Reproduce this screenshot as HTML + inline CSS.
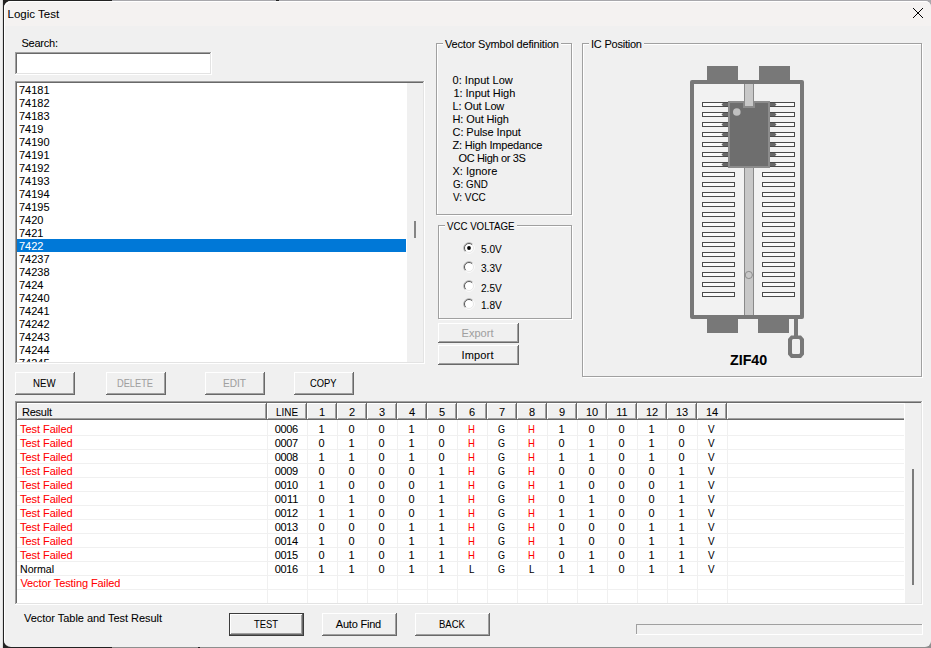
<!DOCTYPE html>
<html><head><meta charset="utf-8"><title>Logic Test</title>
<style>
html,body{margin:0;padding:0;width:931px;height:648px;overflow:hidden;background:#f0f0f0}
#w{position:relative;width:931px;height:648px;overflow:hidden;font:11px "Liberation Sans", sans-serif;}
#w div,#w span,#w svg{position:absolute;display:block}
#w span{white-space:pre;-webkit-text-stroke:0.06px}
</style></head><body><div id="w">
<div style="left:0px;top:0px;width:931px;height:648px;background:#f0f0f0"></div>
<div style="left:2px;top:0px;width:1px;height:648px;background:#dcdcdc"></div>
<div style="left:3px;top:0px;width:109px;height:648px;background:#222"></div>
<div style="left:112px;top:0px;width:819px;height:324px;background:#a8a8ac"></div>
<div style="left:112px;top:324px;width:819px;height:324px;background:#8e8e8e"></div>
<div style="left:198px;top:647px;width:2px;height:1px;background:#222"></div>
<div style="left:276px;top:0px;width:3px;height:1px;background:#222"></div>
<div style="left:4px;top:1px;width:927px;height:646px;background:#f0f0f0;border-radius:7px 6px 6px 7px;overflow:hidden"><div style="left:0;top:0;width:927px;height:25px;background:#f4f2f1"></div></div>
<div style="left:4px;top:1px;width:927px;height:646px;border-radius:7px 6px 6px 7px;box-shadow:inset 1px 1px 0 #fff"></div>
<svg style="left:908px;top:3px" width="20" height="20" viewBox="908 3 20 20"><path d="M913 8 L923 18 M923 8 L913 18" stroke="#000" stroke-width="1" fill="none"/></svg>
<div style="left:15px;top:52px;width:197px;height:23px;background:#fff"></div>
<div style="left:15px;top:52px;width:196px;height:22px;background:#a0a0a0"></div>
<div style="left:16px;top:53px;width:195px;height:21px;background:#e3e3e3"></div>
<div style="left:16px;top:53px;width:194px;height:20px;background:#696969"></div>
<div style="left:17px;top:54px;width:193px;height:19px;background:#fff"></div>
<div style="left:15px;top:81px;width:410px;height:283px;background:#fff"></div>
<div style="left:15px;top:81px;width:409px;height:282px;background:#a0a0a0"></div>
<div style="left:16px;top:82px;width:408px;height:281px;background:#e3e3e3"></div>
<div style="left:16px;top:82px;width:407px;height:280px;background:#696969"></div>
<div style="left:17px;top:83px;width:406px;height:279px;background:#fff"></div>
<div style="left:407px;top:83px;width:16px;height:279px;background:#f0f0f0"></div>
<div style="left:414px;top:221px;width:2px;height:17px;background:#858585"></div>
<div style="left:17px;top:239px;width:389px;height:13px;background:#0078d7"></div>
<div style="left:15px;top:372px;width:60px;height:23px;background:#696969"></div>
<div style="left:15px;top:372px;width:59px;height:22px;background:#fff"></div>
<div style="left:16px;top:373px;width:58px;height:21px;background:#a0a0a0"></div>
<div style="left:16px;top:373px;width:57px;height:20px;background:#f0f0f0"></div>
<div style="left:106px;top:372px;width:60px;height:23px;background:#696969"></div>
<div style="left:106px;top:372px;width:59px;height:22px;background:#fff"></div>
<div style="left:107px;top:373px;width:58px;height:21px;background:#a0a0a0"></div>
<div style="left:107px;top:373px;width:57px;height:20px;background:#f0f0f0"></div>
<div style="left:205px;top:372px;width:60px;height:23px;background:#696969"></div>
<div style="left:205px;top:372px;width:59px;height:22px;background:#fff"></div>
<div style="left:206px;top:373px;width:58px;height:21px;background:#a0a0a0"></div>
<div style="left:206px;top:373px;width:57px;height:20px;background:#f0f0f0"></div>
<div style="left:294px;top:372px;width:60px;height:23px;background:#696969"></div>
<div style="left:294px;top:372px;width:59px;height:22px;background:#fff"></div>
<div style="left:295px;top:373px;width:58px;height:21px;background:#a0a0a0"></div>
<div style="left:295px;top:373px;width:57px;height:20px;background:#f0f0f0"></div>
<div style="left:437px;top:44px;width:136px;height:172px;border:1px solid #fff;box-sizing:border-box"></div>
<div style="left:436px;top:43px;width:136px;height:172px;border:1px solid #a0a0a0;box-sizing:border-box"></div>
<div style="left:443px;top:41px;width:118px;height:5px;background:#f0f0f0"></div>
<div style="left:439px;top:226px;width:134px;height:94px;border:1px solid #fff;box-sizing:border-box"></div>
<div style="left:438px;top:225px;width:134px;height:94px;border:1px solid #a0a0a0;box-sizing:border-box"></div>
<div style="left:445px;top:223px;width:71.5px;height:5px;background:#f0f0f0"></div>
<svg style="left:461.5px;top:240.5px" width="14" height="14" viewBox="-7 -7 14 14"><circle r="4.6" fill="#fff"/><path d="M3.75 -3.75 A5.3 5.3 0 1 0 -3.75 3.75" stroke="#a8a8a8" stroke-width="0.9" fill="none"/><path d="M3.2 -3.2 A4.5 4.5 0 1 0 -3.2 3.2" stroke="#5a5a5a" stroke-width="1" fill="none"/><path d="M-3.75 3.75 A5.3 5.3 0 1 0 3.75 -3.75" stroke="#fff" stroke-width="0.9" fill="none"/><path d="M-3.2 3.2 A4.5 4.5 0 1 0 3.2 -3.2" stroke="#e8e8e8" stroke-width="1" fill="none"/><circle r="1.9" fill="#000"/></svg>
<svg style="left:461.5px;top:259.5px" width="14" height="14" viewBox="-7 -7 14 14"><circle r="4.6" fill="#fff"/><path d="M3.75 -3.75 A5.3 5.3 0 1 0 -3.75 3.75" stroke="#a8a8a8" stroke-width="0.9" fill="none"/><path d="M3.2 -3.2 A4.5 4.5 0 1 0 -3.2 3.2" stroke="#5a5a5a" stroke-width="1" fill="none"/><path d="M-3.75 3.75 A5.3 5.3 0 1 0 3.75 -3.75" stroke="#fff" stroke-width="0.9" fill="none"/><path d="M-3.2 3.2 A4.5 4.5 0 1 0 3.2 -3.2" stroke="#e8e8e8" stroke-width="1" fill="none"/></svg>
<svg style="left:461.5px;top:279px" width="14" height="14" viewBox="-7 -7 14 14"><circle r="4.6" fill="#fff"/><path d="M3.75 -3.75 A5.3 5.3 0 1 0 -3.75 3.75" stroke="#a8a8a8" stroke-width="0.9" fill="none"/><path d="M3.2 -3.2 A4.5 4.5 0 1 0 -3.2 3.2" stroke="#5a5a5a" stroke-width="1" fill="none"/><path d="M-3.75 3.75 A5.3 5.3 0 1 0 3.75 -3.75" stroke="#fff" stroke-width="0.9" fill="none"/><path d="M-3.2 3.2 A4.5 4.5 0 1 0 3.2 -3.2" stroke="#e8e8e8" stroke-width="1" fill="none"/></svg>
<svg style="left:461.5px;top:296.6px" width="14" height="14" viewBox="-7 -7 14 14"><circle r="4.6" fill="#fff"/><path d="M3.75 -3.75 A5.3 5.3 0 1 0 -3.75 3.75" stroke="#a8a8a8" stroke-width="0.9" fill="none"/><path d="M3.2 -3.2 A4.5 4.5 0 1 0 -3.2 3.2" stroke="#5a5a5a" stroke-width="1" fill="none"/><path d="M-3.75 3.75 A5.3 5.3 0 1 0 3.75 -3.75" stroke="#fff" stroke-width="0.9" fill="none"/><path d="M-3.2 3.2 A4.5 4.5 0 1 0 3.2 -3.2" stroke="#e8e8e8" stroke-width="1" fill="none"/></svg>
<div style="left:438px;top:323px;width:81px;height:20px;background:#696969"></div>
<div style="left:438px;top:323px;width:80px;height:19px;background:#fff"></div>
<div style="left:439px;top:324px;width:79px;height:18px;background:#a0a0a0"></div>
<div style="left:439px;top:324px;width:78px;height:17px;background:#f0f0f0"></div>
<div style="left:438px;top:345px;width:81px;height:20px;background:#696969"></div>
<div style="left:438px;top:345px;width:80px;height:19px;background:#fff"></div>
<div style="left:439px;top:346px;width:79px;height:18px;background:#a0a0a0"></div>
<div style="left:439px;top:346px;width:78px;height:17px;background:#f0f0f0"></div>
<div style="left:583px;top:44px;width:340px;height:334px;border:1px solid #fff;box-sizing:border-box"></div>
<div style="left:582px;top:43px;width:340px;height:334px;border:1px solid #a0a0a0;box-sizing:border-box"></div>
<div style="left:589px;top:41px;width:55px;height:5px;background:#f0f0f0"></div>
<svg style="left:680px;top:60px" width="140" height="310" viewBox="680 60 140 310" shape-rendering="crispEdges"><rect x="707" y="66" width="31" height="15" fill="#787878"/><rect x="759" y="66" width="31" height="15" fill="#787878"/><rect x="707" y="318" width="31" height="15" fill="#787878"/><rect x="758" y="318" width="31" height="15" fill="#787878"/><rect x="690" y="80" width="114" height="239" rx="2" fill="#787878" shape-rendering="auto"/><rect x="694" y="84" width="106" height="231" fill="#f2f2f2"/><rect x="744" y="84" width="10" height="231" fill="#8a8a8a"/><rect x="745" y="84" width="8" height="231" fill="#c8c8c8"/><rect x="702" y="102" width="33" height="5" fill="#4a4a4a"/><rect x="703" y="103" width="31" height="3" fill="#fafafa"/><rect x="762" y="102" width="33" height="5" fill="#4a4a4a"/><rect x="763" y="103" width="31" height="3" fill="#fafafa"/><rect x="702" y="112" width="33" height="5" fill="#4a4a4a"/><rect x="703" y="113" width="31" height="3" fill="#fafafa"/><rect x="762" y="112" width="33" height="5" fill="#4a4a4a"/><rect x="763" y="113" width="31" height="3" fill="#fafafa"/><rect x="702" y="122" width="33" height="5" fill="#4a4a4a"/><rect x="703" y="123" width="31" height="3" fill="#fafafa"/><rect x="762" y="122" width="33" height="5" fill="#4a4a4a"/><rect x="763" y="123" width="31" height="3" fill="#fafafa"/><rect x="702" y="132" width="33" height="5" fill="#4a4a4a"/><rect x="703" y="133" width="31" height="3" fill="#fafafa"/><rect x="762" y="132" width="33" height="5" fill="#4a4a4a"/><rect x="763" y="133" width="31" height="3" fill="#fafafa"/><rect x="702" y="142" width="33" height="5" fill="#4a4a4a"/><rect x="703" y="143" width="31" height="3" fill="#fafafa"/><rect x="762" y="142" width="33" height="5" fill="#4a4a4a"/><rect x="763" y="143" width="31" height="3" fill="#fafafa"/><rect x="702" y="152" width="33" height="5" fill="#4a4a4a"/><rect x="703" y="153" width="31" height="3" fill="#fafafa"/><rect x="762" y="152" width="33" height="5" fill="#4a4a4a"/><rect x="763" y="153" width="31" height="3" fill="#fafafa"/><rect x="702" y="162" width="33" height="5" fill="#4a4a4a"/><rect x="703" y="163" width="31" height="3" fill="#fafafa"/><rect x="762" y="162" width="33" height="5" fill="#4a4a4a"/><rect x="763" y="163" width="31" height="3" fill="#fafafa"/><rect x="702" y="172" width="33" height="5" fill="#4a4a4a"/><rect x="703" y="173" width="31" height="3" fill="#fafafa"/><rect x="762" y="172" width="33" height="5" fill="#4a4a4a"/><rect x="763" y="173" width="31" height="3" fill="#fafafa"/><rect x="702" y="182" width="33" height="5" fill="#4a4a4a"/><rect x="703" y="183" width="31" height="3" fill="#fafafa"/><rect x="762" y="182" width="33" height="5" fill="#4a4a4a"/><rect x="763" y="183" width="31" height="3" fill="#fafafa"/><rect x="702" y="192" width="33" height="5" fill="#4a4a4a"/><rect x="703" y="193" width="31" height="3" fill="#fafafa"/><rect x="762" y="192" width="33" height="5" fill="#4a4a4a"/><rect x="763" y="193" width="31" height="3" fill="#fafafa"/><rect x="702" y="202" width="33" height="5" fill="#4a4a4a"/><rect x="703" y="203" width="31" height="3" fill="#fafafa"/><rect x="762" y="202" width="33" height="5" fill="#4a4a4a"/><rect x="763" y="203" width="31" height="3" fill="#fafafa"/><rect x="702" y="212" width="33" height="5" fill="#4a4a4a"/><rect x="703" y="213" width="31" height="3" fill="#fafafa"/><rect x="762" y="212" width="33" height="5" fill="#4a4a4a"/><rect x="763" y="213" width="31" height="3" fill="#fafafa"/><rect x="702" y="222" width="33" height="5" fill="#4a4a4a"/><rect x="703" y="223" width="31" height="3" fill="#fafafa"/><rect x="762" y="222" width="33" height="5" fill="#4a4a4a"/><rect x="763" y="223" width="31" height="3" fill="#fafafa"/><rect x="702" y="232" width="33" height="5" fill="#4a4a4a"/><rect x="703" y="233" width="31" height="3" fill="#fafafa"/><rect x="762" y="232" width="33" height="5" fill="#4a4a4a"/><rect x="763" y="233" width="31" height="3" fill="#fafafa"/><rect x="702" y="242" width="33" height="5" fill="#4a4a4a"/><rect x="703" y="243" width="31" height="3" fill="#fafafa"/><rect x="762" y="242" width="33" height="5" fill="#4a4a4a"/><rect x="763" y="243" width="31" height="3" fill="#fafafa"/><rect x="702" y="252" width="33" height="5" fill="#4a4a4a"/><rect x="703" y="253" width="31" height="3" fill="#fafafa"/><rect x="762" y="252" width="33" height="5" fill="#4a4a4a"/><rect x="763" y="253" width="31" height="3" fill="#fafafa"/><rect x="702" y="262" width="33" height="5" fill="#4a4a4a"/><rect x="703" y="263" width="31" height="3" fill="#fafafa"/><rect x="762" y="262" width="33" height="5" fill="#4a4a4a"/><rect x="763" y="263" width="31" height="3" fill="#fafafa"/><rect x="702" y="272" width="33" height="5" fill="#4a4a4a"/><rect x="703" y="273" width="31" height="3" fill="#fafafa"/><rect x="762" y="272" width="33" height="5" fill="#4a4a4a"/><rect x="763" y="273" width="31" height="3" fill="#fafafa"/><rect x="702" y="282" width="33" height="5" fill="#4a4a4a"/><rect x="703" y="283" width="31" height="3" fill="#fafafa"/><rect x="762" y="282" width="33" height="5" fill="#4a4a4a"/><rect x="763" y="283" width="31" height="3" fill="#fafafa"/><rect x="702" y="292" width="33" height="5" fill="#4a4a4a"/><rect x="703" y="293" width="31" height="3" fill="#fafafa"/><rect x="762" y="292" width="33" height="5" fill="#4a4a4a"/><rect x="763" y="293" width="31" height="3" fill="#fafafa"/><path d="M729 103 L723 103 L721.5 104.5 L723 106 L729 106 Z" fill="#686868" shape-rendering="auto"/><path d="M769 103 L775 103 L776.5 104.5 L775 106 L769 106 Z" fill="#686868" shape-rendering="auto"/><path d="M729 113 L723 113 L721.5 114.5 L723 116 L729 116 Z" fill="#686868" shape-rendering="auto"/><path d="M769 113 L775 113 L776.5 114.5 L775 116 L769 116 Z" fill="#686868" shape-rendering="auto"/><path d="M729 123 L723 123 L721.5 124.5 L723 126 L729 126 Z" fill="#686868" shape-rendering="auto"/><path d="M769 123 L775 123 L776.5 124.5 L775 126 L769 126 Z" fill="#686868" shape-rendering="auto"/><path d="M729 133 L723 133 L721.5 134.5 L723 136 L729 136 Z" fill="#686868" shape-rendering="auto"/><path d="M769 133 L775 133 L776.5 134.5 L775 136 L769 136 Z" fill="#686868" shape-rendering="auto"/><path d="M729 143 L723 143 L721.5 144.5 L723 146 L729 146 Z" fill="#686868" shape-rendering="auto"/><path d="M769 143 L775 143 L776.5 144.5 L775 146 L769 146 Z" fill="#686868" shape-rendering="auto"/><path d="M729 153 L723 153 L721.5 154.5 L723 156 L729 156 Z" fill="#686868" shape-rendering="auto"/><path d="M769 153 L775 153 L776.5 154.5 L775 156 L769 156 Z" fill="#686868" shape-rendering="auto"/><path d="M729 163 L723 163 L721.5 164.5 L723 166 L729 166 Z" fill="#686868" shape-rendering="auto"/><path d="M769 163 L775 163 L776.5 164.5 L775 166 L769 166 Z" fill="#686868" shape-rendering="auto"/><path d="M728 101 H744 V106 H754 V101 H770 V168 H728 Z" fill="#8c8c8c"/><path d="M730 103 H743 V108 H755 V103 H768 V166 H730 Z" fill="#6e6e6e"/><rect x="745" y="101" width="8" height="5" fill="#c8c8c8"/><rect x="744" y="101" width="1" height="5" fill="#8a8a8a"/><rect x="753" y="101" width="1" height="5" fill="#8a8a8a"/><circle cx="736.8" cy="112" r="3.8" fill="#c0c0c0" shape-rendering="auto"/><circle cx="748.8" cy="275" r="3.6" fill="#c8c8c8" stroke="#8c8c8c" stroke-width="1" shape-rendering="auto"/><rect x="794" y="319" width="4" height="18" fill="#787878"/><path shape-rendering="auto" fill-rule="evenodd" fill="#787878" d="M791 335.5 H801 L804 339 V354.5 L801 358 H791 L788 354.5 V339 Z M793.3 339 H798.7 Q800 339 800 340.5 V352.5 Q800 354 798.7 354 H793.3 Q792 354 792 352.5 V340.5 Q792 339 793.3 339 Z"/></svg>
<div style="left:15px;top:401px;width:908px;height:204px;background:#fff"></div>
<div style="left:15px;top:401px;width:907px;height:203px;background:#a0a0a0"></div>
<div style="left:16px;top:402px;width:906px;height:202px;background:#e3e3e3"></div>
<div style="left:16px;top:402px;width:905px;height:201px;background:#696969"></div>
<div style="left:17px;top:403px;width:904px;height:200px;background:#fff"></div>
<div style="left:17px;top:403px;width:888px;height:17px;background:#f0f0f0"></div>
<div style="left:17px;top:403px;width:250px;height:17px;background:#696969"></div>
<div style="left:17px;top:403px;width:249px;height:16px;background:#fff"></div>
<div style="left:18px;top:404px;width:248px;height:15px;background:#a0a0a0"></div>
<div style="left:18px;top:404px;width:247px;height:14px;background:#f0f0f0"></div>
<div style="left:267px;top:403px;width:40px;height:17px;background:#696969"></div>
<div style="left:267px;top:403px;width:39px;height:16px;background:#fff"></div>
<div style="left:268px;top:404px;width:38px;height:15px;background:#a0a0a0"></div>
<div style="left:268px;top:404px;width:37px;height:14px;background:#f0f0f0"></div>
<div style="left:307px;top:403px;width:30px;height:17px;background:#696969"></div>
<div style="left:307px;top:403px;width:29px;height:16px;background:#fff"></div>
<div style="left:308px;top:404px;width:28px;height:15px;background:#a0a0a0"></div>
<div style="left:308px;top:404px;width:27px;height:14px;background:#f0f0f0"></div>
<div style="left:337px;top:403px;width:30px;height:17px;background:#696969"></div>
<div style="left:337px;top:403px;width:29px;height:16px;background:#fff"></div>
<div style="left:338px;top:404px;width:28px;height:15px;background:#a0a0a0"></div>
<div style="left:338px;top:404px;width:27px;height:14px;background:#f0f0f0"></div>
<div style="left:367px;top:403px;width:30px;height:17px;background:#696969"></div>
<div style="left:367px;top:403px;width:29px;height:16px;background:#fff"></div>
<div style="left:368px;top:404px;width:28px;height:15px;background:#a0a0a0"></div>
<div style="left:368px;top:404px;width:27px;height:14px;background:#f0f0f0"></div>
<div style="left:397px;top:403px;width:30px;height:17px;background:#696969"></div>
<div style="left:397px;top:403px;width:29px;height:16px;background:#fff"></div>
<div style="left:398px;top:404px;width:28px;height:15px;background:#a0a0a0"></div>
<div style="left:398px;top:404px;width:27px;height:14px;background:#f0f0f0"></div>
<div style="left:427px;top:403px;width:30px;height:17px;background:#696969"></div>
<div style="left:427px;top:403px;width:29px;height:16px;background:#fff"></div>
<div style="left:428px;top:404px;width:28px;height:15px;background:#a0a0a0"></div>
<div style="left:428px;top:404px;width:27px;height:14px;background:#f0f0f0"></div>
<div style="left:457px;top:403px;width:30px;height:17px;background:#696969"></div>
<div style="left:457px;top:403px;width:29px;height:16px;background:#fff"></div>
<div style="left:458px;top:404px;width:28px;height:15px;background:#a0a0a0"></div>
<div style="left:458px;top:404px;width:27px;height:14px;background:#f0f0f0"></div>
<div style="left:487px;top:403px;width:30px;height:17px;background:#696969"></div>
<div style="left:487px;top:403px;width:29px;height:16px;background:#fff"></div>
<div style="left:488px;top:404px;width:28px;height:15px;background:#a0a0a0"></div>
<div style="left:488px;top:404px;width:27px;height:14px;background:#f0f0f0"></div>
<div style="left:517px;top:403px;width:30px;height:17px;background:#696969"></div>
<div style="left:517px;top:403px;width:29px;height:16px;background:#fff"></div>
<div style="left:518px;top:404px;width:28px;height:15px;background:#a0a0a0"></div>
<div style="left:518px;top:404px;width:27px;height:14px;background:#f0f0f0"></div>
<div style="left:547px;top:403px;width:30px;height:17px;background:#696969"></div>
<div style="left:547px;top:403px;width:29px;height:16px;background:#fff"></div>
<div style="left:548px;top:404px;width:28px;height:15px;background:#a0a0a0"></div>
<div style="left:548px;top:404px;width:27px;height:14px;background:#f0f0f0"></div>
<div style="left:577px;top:403px;width:30px;height:17px;background:#696969"></div>
<div style="left:577px;top:403px;width:29px;height:16px;background:#fff"></div>
<div style="left:578px;top:404px;width:28px;height:15px;background:#a0a0a0"></div>
<div style="left:578px;top:404px;width:27px;height:14px;background:#f0f0f0"></div>
<div style="left:607px;top:403px;width:30px;height:17px;background:#696969"></div>
<div style="left:607px;top:403px;width:29px;height:16px;background:#fff"></div>
<div style="left:608px;top:404px;width:28px;height:15px;background:#a0a0a0"></div>
<div style="left:608px;top:404px;width:27px;height:14px;background:#f0f0f0"></div>
<div style="left:637px;top:403px;width:30px;height:17px;background:#696969"></div>
<div style="left:637px;top:403px;width:29px;height:16px;background:#fff"></div>
<div style="left:638px;top:404px;width:28px;height:15px;background:#a0a0a0"></div>
<div style="left:638px;top:404px;width:27px;height:14px;background:#f0f0f0"></div>
<div style="left:667px;top:403px;width:30px;height:17px;background:#696969"></div>
<div style="left:667px;top:403px;width:29px;height:16px;background:#fff"></div>
<div style="left:668px;top:404px;width:28px;height:15px;background:#a0a0a0"></div>
<div style="left:668px;top:404px;width:27px;height:14px;background:#f0f0f0"></div>
<div style="left:697px;top:403px;width:30px;height:17px;background:#696969"></div>
<div style="left:697px;top:403px;width:29px;height:16px;background:#fff"></div>
<div style="left:698px;top:404px;width:28px;height:15px;background:#a0a0a0"></div>
<div style="left:698px;top:404px;width:27px;height:14px;background:#f0f0f0"></div>
<div style="left:727px;top:403px;width:194px;height:17px;background:#696969"></div>
<div style="left:727px;top:403px;width:193px;height:16px;background:#fff"></div>
<div style="left:728px;top:404px;width:192px;height:15px;background:#a0a0a0"></div>
<div style="left:728px;top:404px;width:191px;height:14px;background:#f0f0f0"></div>
<div style="left:17px;top:435px;width:888px;height:1px;background:#f0f0f0"></div>
<div style="left:17px;top:449px;width:888px;height:1px;background:#f0f0f0"></div>
<div style="left:17px;top:463px;width:888px;height:1px;background:#f0f0f0"></div>
<div style="left:17px;top:477px;width:888px;height:1px;background:#f0f0f0"></div>
<div style="left:17px;top:491px;width:888px;height:1px;background:#f0f0f0"></div>
<div style="left:17px;top:505px;width:888px;height:1px;background:#f0f0f0"></div>
<div style="left:17px;top:519px;width:888px;height:1px;background:#f0f0f0"></div>
<div style="left:17px;top:533px;width:888px;height:1px;background:#f0f0f0"></div>
<div style="left:17px;top:547px;width:888px;height:1px;background:#f0f0f0"></div>
<div style="left:17px;top:561px;width:888px;height:1px;background:#f0f0f0"></div>
<div style="left:17px;top:575px;width:888px;height:1px;background:#f0f0f0"></div>
<div style="left:17px;top:589px;width:888px;height:1px;background:#f0f0f0"></div>
<div style="left:267px;top:420px;width:1px;height:183px;background:#f0f0f0"></div>
<div style="left:307px;top:420px;width:1px;height:183px;background:#f0f0f0"></div>
<div style="left:337px;top:420px;width:1px;height:183px;background:#f0f0f0"></div>
<div style="left:367px;top:420px;width:1px;height:183px;background:#f0f0f0"></div>
<div style="left:397px;top:420px;width:1px;height:183px;background:#f0f0f0"></div>
<div style="left:427px;top:420px;width:1px;height:183px;background:#f0f0f0"></div>
<div style="left:457px;top:420px;width:1px;height:183px;background:#f0f0f0"></div>
<div style="left:487px;top:420px;width:1px;height:183px;background:#f0f0f0"></div>
<div style="left:517px;top:420px;width:1px;height:183px;background:#f0f0f0"></div>
<div style="left:547px;top:420px;width:1px;height:183px;background:#f0f0f0"></div>
<div style="left:577px;top:420px;width:1px;height:183px;background:#f0f0f0"></div>
<div style="left:607px;top:420px;width:1px;height:183px;background:#f0f0f0"></div>
<div style="left:637px;top:420px;width:1px;height:183px;background:#f0f0f0"></div>
<div style="left:667px;top:420px;width:1px;height:183px;background:#f0f0f0"></div>
<div style="left:697px;top:420px;width:1px;height:183px;background:#f0f0f0"></div>
<div style="left:727px;top:420px;width:1px;height:183px;background:#f0f0f0"></div>
<div style="left:904px;top:403px;width:1px;height:200px;background:#fff"></div>
<div style="left:905px;top:403px;width:16px;height:200px;background:#f0f0f0"></div>
<div style="left:912px;top:469px;width:2px;height:116px;background:#7c7c7c"></div>
<div style="left:229px;top:613px;width:75px;height:23px;background:#3c3c3c"></div>
<div style="left:230px;top:614px;width:73px;height:21px;background:#696969"></div>
<div style="left:230px;top:614px;width:72px;height:20px;background:#fff"></div>
<div style="left:231px;top:615px;width:71px;height:19px;background:#a0a0a0"></div>
<div style="left:231px;top:615px;width:70px;height:18px;background:#f0f0f0"></div>
<div style="left:322px;top:613px;width:75px;height:23px;background:#696969"></div>
<div style="left:322px;top:613px;width:74px;height:22px;background:#fff"></div>
<div style="left:323px;top:614px;width:73px;height:21px;background:#a0a0a0"></div>
<div style="left:323px;top:614px;width:72px;height:20px;background:#f0f0f0"></div>
<div style="left:415px;top:613px;width:75px;height:23px;background:#696969"></div>
<div style="left:415px;top:613px;width:74px;height:22px;background:#fff"></div>
<div style="left:416px;top:614px;width:73px;height:21px;background:#a0a0a0"></div>
<div style="left:416px;top:614px;width:72px;height:20px;background:#f0f0f0"></div>
<div style="left:636px;top:624px;width:287px;height:11px;background:#fff"></div>
<div style="left:636px;top:624px;width:286px;height:10px;background:#a0a0a0"></div>
<div style="left:637px;top:625px;width:285px;height:9px;background:#f0f0f0"></div>
<span style="left:7.60px;top:7.5px;line-height:13.5px;color:#000;letter-spacing:-0.009px;font-size:11.5px;">Logic Test</span>
<span style="left:21.50px;top:37px;line-height:13px;color:#000;letter-spacing:-0.237px;">Search:</span>
<span style="left:19.00px;top:84px;line-height:13px;color:#000;">74181</span>
<span style="left:19.00px;top:97px;line-height:13px;color:#000;">74182</span>
<span style="left:19.00px;top:110px;line-height:13px;color:#000;">74183</span>
<span style="left:19.00px;top:123px;line-height:13px;color:#000;">7419</span>
<span style="left:19.00px;top:136px;line-height:13px;color:#000;">74190</span>
<span style="left:19.00px;top:149px;line-height:13px;color:#000;">74191</span>
<span style="left:19.00px;top:162px;line-height:13px;color:#000;">74192</span>
<span style="left:19.00px;top:175px;line-height:13px;color:#000;">74193</span>
<span style="left:19.00px;top:188px;line-height:13px;color:#000;">74194</span>
<span style="left:19.00px;top:201px;line-height:13px;color:#000;">74195</span>
<span style="left:19.00px;top:214px;line-height:13px;color:#000;">7420</span>
<span style="left:19.00px;top:227px;line-height:13px;color:#000;">7421</span>
<span style="left:19.00px;top:240px;line-height:13px;color:#fff;">7422</span>
<span style="left:19.00px;top:253px;line-height:13px;color:#000;">74237</span>
<span style="left:19.00px;top:266px;line-height:13px;color:#000;">74238</span>
<span style="left:19.00px;top:279px;line-height:13px;color:#000;">7424</span>
<span style="left:19.00px;top:292px;line-height:13px;color:#000;">74240</span>
<span style="left:19.00px;top:305px;line-height:13px;color:#000;">74241</span>
<span style="left:19.00px;top:318px;line-height:13px;color:#000;">74242</span>
<span style="left:19.00px;top:331px;line-height:13px;color:#000;">74243</span>
<span style="left:19.00px;top:344px;line-height:13px;color:#000;">74244</span>
<span style="left:19.00px;top:357px;line-height:13px;color:#000;clip-path:inset(0 0 8px 0);">74245</span>
<span style="left:32.75px;top:377px;line-height:13px;color:#000;transform:scaleX(0.8764);transform-origin:0 0;">NEW</span>
<span style="left:117.00px;top:377px;line-height:13px;color:#a0a0a0;transform:scaleX(0.8412);transform-origin:0 0;">DELETE</span>
<span style="left:222.50px;top:377px;line-height:13px;color:#a0a0a0;transform:scaleX(0.9177);transform-origin:0 0;">EDIT</span>
<span style="left:309.75px;top:377px;line-height:13px;color:#000;transform:scaleX(0.8497);transform-origin:0 0;">COPY</span>
<span style="left:445.00px;top:38px;line-height:13px;color:#000;letter-spacing:-0.175px;">Vector Symbol definition</span>
<span style="left:452.50px;top:74px;line-height:13px;color:#000;letter-spacing:0.033px;">0: Input Low</span>
<span style="left:453.50px;top:87px;line-height:13px;color:#000;letter-spacing:-0.048px;">1: Input High</span>
<span style="left:452.50px;top:100px;line-height:13px;color:#000;letter-spacing:-0.156px;">L: Out Low</span>
<span style="left:452.50px;top:113px;line-height:13px;color:#000;letter-spacing:-0.117px;">H: Out High</span>
<span style="left:452.50px;top:126px;line-height:13px;color:#000;letter-spacing:-0.061px;">C: Pulse Input</span>
<span style="left:452.50px;top:139px;line-height:13px;color:#000;letter-spacing:-0.196px;">Z: High Impedance</span>
<span style="left:458.50px;top:152px;line-height:13px;color:#000;letter-spacing:-0.353px;">OC High or 3S</span>
<span style="left:452.50px;top:165px;line-height:13px;color:#000;letter-spacing:0.020px;">X: Ignore</span>
<span style="left:452.50px;top:178px;line-height:13px;color:#000;transform:scaleX(0.8895);transform-origin:0 0;">G: GND</span>
<span style="left:452.50px;top:191px;line-height:13px;color:#000;transform:scaleX(0.9044);transform-origin:0 0;">V: VCC</span>
<span style="left:447.00px;top:220px;line-height:13px;color:#000;transform:scaleX(0.8811);transform-origin:0 0;">VCC VOLTAGE</span>
<span style="left:480.80px;top:243px;line-height:13px;color:#000;transform:scaleX(0.9187);transform-origin:0 0;">5.0V</span>
<span style="left:480.80px;top:262px;line-height:13px;color:#000;transform:scaleX(0.9187);transform-origin:0 0;">3.3V</span>
<span style="left:480.80px;top:281.5px;line-height:13px;color:#000;transform:scaleX(0.9187);transform-origin:0 0;">2.5V</span>
<span style="left:480.80px;top:299px;line-height:13px;color:#000;transform:scaleX(0.9187);transform-origin:0 0;">1.8V</span>
<span style="left:461.50px;top:327px;line-height:13px;color:#a0a0a0;letter-spacing:0.041px;">Export</span>
<span style="left:461.50px;top:349px;line-height:13px;color:#000;letter-spacing:0.163px;">Import</span>
<span style="left:591.00px;top:38px;line-height:13px;color:#000;letter-spacing:-0.220px;">IC Position</span>
<span style="left:729.50px;top:352px;line-height:16px;color:#000;transform:scaleX(1.0170);transform-origin:0 0;font-size:14px;font-weight:bold;">ZIF40</span>
<span style="left:22.00px;top:406px;line-height:13px;color:#000;letter-spacing:-0.237px;">Result</span>
<span style="left:275.50px;top:406px;line-height:13px;color:#000;transform:scaleX(0.8991);transform-origin:0 0;">LINE</span>
<span style="left:318.94px;top:406px;line-height:13px;color:#000;">1</span>
<span style="left:348.94px;top:406px;line-height:13px;color:#000;">2</span>
<span style="left:378.94px;top:406px;line-height:13px;color:#000;">3</span>
<span style="left:408.94px;top:406px;line-height:13px;color:#000;">4</span>
<span style="left:438.94px;top:406px;line-height:13px;color:#000;">5</span>
<span style="left:468.94px;top:406px;line-height:13px;color:#000;">6</span>
<span style="left:498.94px;top:406px;line-height:13px;color:#000;">7</span>
<span style="left:528.94px;top:406px;line-height:13px;color:#000;">8</span>
<span style="left:558.94px;top:406px;line-height:13px;color:#000;">9</span>
<span style="left:585.88px;top:406px;line-height:13px;color:#000;">10</span>
<span style="left:616.29px;top:406px;line-height:13px;color:#000;">11</span>
<span style="left:645.88px;top:406px;line-height:13px;color:#000;">12</span>
<span style="left:675.88px;top:406px;line-height:13px;color:#000;">13</span>
<span style="left:705.88px;top:406px;line-height:13px;color:#000;">14</span>
<span style="left:20.00px;top:423px;line-height:13px;color:#f00;letter-spacing:-0.050px;">Test Failed</span>
<span style="left:274.75px;top:423px;line-height:13px;color:#000;letter-spacing:-0.328px;">0006</span>
<span style="left:318.54px;top:423px;line-height:13px;color:#000;">1</span>
<span style="left:348.54px;top:423px;line-height:13px;color:#000;">0</span>
<span style="left:378.54px;top:423px;line-height:13px;color:#000;">0</span>
<span style="left:408.54px;top:423px;line-height:13px;color:#000;">1</span>
<span style="left:438.54px;top:423px;line-height:13px;color:#000;">0</span>
<span style="left:467.95px;top:423px;line-height:13px;color:#f00;transform:scaleX(0.8676);transform-origin:0 0;">H</span>
<span style="left:497.90px;top:423px;line-height:13px;color:#000;transform:scaleX(0.8175);transform-origin:0 0;">G</span>
<span style="left:527.95px;top:423px;line-height:13px;color:#f00;transform:scaleX(0.8676);transform-origin:0 0;">H</span>
<span style="left:558.54px;top:423px;line-height:13px;color:#000;">1</span>
<span style="left:588.54px;top:423px;line-height:13px;color:#000;">0</span>
<span style="left:618.54px;top:423px;line-height:13px;color:#000;">0</span>
<span style="left:648.54px;top:423px;line-height:13px;color:#000;">1</span>
<span style="left:678.54px;top:423px;line-height:13px;color:#000;">0</span>
<span style="left:708.10px;top:423px;line-height:13px;color:#000;transform:scaleX(0.8987);transform-origin:0 0;">V</span>
<span style="left:20.00px;top:437px;line-height:13px;color:#f00;letter-spacing:-0.050px;">Test Failed</span>
<span style="left:274.75px;top:437px;line-height:13px;color:#000;letter-spacing:-0.328px;">0007</span>
<span style="left:318.54px;top:437px;line-height:13px;color:#000;">0</span>
<span style="left:348.54px;top:437px;line-height:13px;color:#000;">1</span>
<span style="left:378.54px;top:437px;line-height:13px;color:#000;">0</span>
<span style="left:408.54px;top:437px;line-height:13px;color:#000;">1</span>
<span style="left:438.54px;top:437px;line-height:13px;color:#000;">0</span>
<span style="left:467.95px;top:437px;line-height:13px;color:#f00;transform:scaleX(0.8676);transform-origin:0 0;">H</span>
<span style="left:497.90px;top:437px;line-height:13px;color:#000;transform:scaleX(0.8175);transform-origin:0 0;">G</span>
<span style="left:527.95px;top:437px;line-height:13px;color:#f00;transform:scaleX(0.8676);transform-origin:0 0;">H</span>
<span style="left:558.54px;top:437px;line-height:13px;color:#000;">0</span>
<span style="left:588.54px;top:437px;line-height:13px;color:#000;">1</span>
<span style="left:618.54px;top:437px;line-height:13px;color:#000;">0</span>
<span style="left:648.54px;top:437px;line-height:13px;color:#000;">1</span>
<span style="left:678.54px;top:437px;line-height:13px;color:#000;">0</span>
<span style="left:708.10px;top:437px;line-height:13px;color:#000;transform:scaleX(0.8987);transform-origin:0 0;">V</span>
<span style="left:20.00px;top:451px;line-height:13px;color:#f00;letter-spacing:-0.050px;">Test Failed</span>
<span style="left:274.75px;top:451px;line-height:13px;color:#000;letter-spacing:-0.328px;">0008</span>
<span style="left:318.54px;top:451px;line-height:13px;color:#000;">1</span>
<span style="left:348.54px;top:451px;line-height:13px;color:#000;">1</span>
<span style="left:378.54px;top:451px;line-height:13px;color:#000;">0</span>
<span style="left:408.54px;top:451px;line-height:13px;color:#000;">1</span>
<span style="left:438.54px;top:451px;line-height:13px;color:#000;">0</span>
<span style="left:467.95px;top:451px;line-height:13px;color:#f00;transform:scaleX(0.8676);transform-origin:0 0;">H</span>
<span style="left:497.90px;top:451px;line-height:13px;color:#000;transform:scaleX(0.8175);transform-origin:0 0;">G</span>
<span style="left:527.95px;top:451px;line-height:13px;color:#f00;transform:scaleX(0.8676);transform-origin:0 0;">H</span>
<span style="left:558.54px;top:451px;line-height:13px;color:#000;">1</span>
<span style="left:588.54px;top:451px;line-height:13px;color:#000;">1</span>
<span style="left:618.54px;top:451px;line-height:13px;color:#000;">0</span>
<span style="left:648.54px;top:451px;line-height:13px;color:#000;">1</span>
<span style="left:678.54px;top:451px;line-height:13px;color:#000;">0</span>
<span style="left:708.10px;top:451px;line-height:13px;color:#000;transform:scaleX(0.8987);transform-origin:0 0;">V</span>
<span style="left:20.00px;top:465px;line-height:13px;color:#f00;letter-spacing:-0.050px;">Test Failed</span>
<span style="left:274.75px;top:465px;line-height:13px;color:#000;letter-spacing:-0.328px;">0009</span>
<span style="left:318.54px;top:465px;line-height:13px;color:#000;">0</span>
<span style="left:348.54px;top:465px;line-height:13px;color:#000;">0</span>
<span style="left:378.54px;top:465px;line-height:13px;color:#000;">0</span>
<span style="left:408.54px;top:465px;line-height:13px;color:#000;">0</span>
<span style="left:438.54px;top:465px;line-height:13px;color:#000;">1</span>
<span style="left:467.95px;top:465px;line-height:13px;color:#f00;transform:scaleX(0.8676);transform-origin:0 0;">H</span>
<span style="left:497.90px;top:465px;line-height:13px;color:#000;transform:scaleX(0.8175);transform-origin:0 0;">G</span>
<span style="left:527.95px;top:465px;line-height:13px;color:#f00;transform:scaleX(0.8676);transform-origin:0 0;">H</span>
<span style="left:558.54px;top:465px;line-height:13px;color:#000;">0</span>
<span style="left:588.54px;top:465px;line-height:13px;color:#000;">0</span>
<span style="left:618.54px;top:465px;line-height:13px;color:#000;">0</span>
<span style="left:648.54px;top:465px;line-height:13px;color:#000;">0</span>
<span style="left:678.54px;top:465px;line-height:13px;color:#000;">1</span>
<span style="left:708.10px;top:465px;line-height:13px;color:#000;transform:scaleX(0.8987);transform-origin:0 0;">V</span>
<span style="left:20.00px;top:479px;line-height:13px;color:#f00;letter-spacing:-0.050px;">Test Failed</span>
<span style="left:274.75px;top:479px;line-height:13px;color:#000;letter-spacing:-0.328px;">0010</span>
<span style="left:318.54px;top:479px;line-height:13px;color:#000;">1</span>
<span style="left:348.54px;top:479px;line-height:13px;color:#000;">0</span>
<span style="left:378.54px;top:479px;line-height:13px;color:#000;">0</span>
<span style="left:408.54px;top:479px;line-height:13px;color:#000;">0</span>
<span style="left:438.54px;top:479px;line-height:13px;color:#000;">1</span>
<span style="left:467.95px;top:479px;line-height:13px;color:#f00;transform:scaleX(0.8676);transform-origin:0 0;">H</span>
<span style="left:497.90px;top:479px;line-height:13px;color:#000;transform:scaleX(0.8175);transform-origin:0 0;">G</span>
<span style="left:527.95px;top:479px;line-height:13px;color:#f00;transform:scaleX(0.8676);transform-origin:0 0;">H</span>
<span style="left:558.54px;top:479px;line-height:13px;color:#000;">1</span>
<span style="left:588.54px;top:479px;line-height:13px;color:#000;">0</span>
<span style="left:618.54px;top:479px;line-height:13px;color:#000;">0</span>
<span style="left:648.54px;top:479px;line-height:13px;color:#000;">0</span>
<span style="left:678.54px;top:479px;line-height:13px;color:#000;">1</span>
<span style="left:708.10px;top:479px;line-height:13px;color:#000;transform:scaleX(0.8987);transform-origin:0 0;">V</span>
<span style="left:20.00px;top:493px;line-height:13px;color:#f00;letter-spacing:-0.050px;">Test Failed</span>
<span style="left:274.75px;top:493px;line-height:13px;color:#000;letter-spacing:-0.052px;">0011</span>
<span style="left:318.54px;top:493px;line-height:13px;color:#000;">0</span>
<span style="left:348.54px;top:493px;line-height:13px;color:#000;">1</span>
<span style="left:378.54px;top:493px;line-height:13px;color:#000;">0</span>
<span style="left:408.54px;top:493px;line-height:13px;color:#000;">0</span>
<span style="left:438.54px;top:493px;line-height:13px;color:#000;">1</span>
<span style="left:467.95px;top:493px;line-height:13px;color:#f00;transform:scaleX(0.8676);transform-origin:0 0;">H</span>
<span style="left:497.90px;top:493px;line-height:13px;color:#000;transform:scaleX(0.8175);transform-origin:0 0;">G</span>
<span style="left:527.95px;top:493px;line-height:13px;color:#f00;transform:scaleX(0.8676);transform-origin:0 0;">H</span>
<span style="left:558.54px;top:493px;line-height:13px;color:#000;">0</span>
<span style="left:588.54px;top:493px;line-height:13px;color:#000;">1</span>
<span style="left:618.54px;top:493px;line-height:13px;color:#000;">0</span>
<span style="left:648.54px;top:493px;line-height:13px;color:#000;">0</span>
<span style="left:678.54px;top:493px;line-height:13px;color:#000;">1</span>
<span style="left:708.10px;top:493px;line-height:13px;color:#000;transform:scaleX(0.8987);transform-origin:0 0;">V</span>
<span style="left:20.00px;top:507px;line-height:13px;color:#f00;letter-spacing:-0.050px;">Test Failed</span>
<span style="left:274.75px;top:507px;line-height:13px;color:#000;letter-spacing:-0.328px;">0012</span>
<span style="left:318.54px;top:507px;line-height:13px;color:#000;">1</span>
<span style="left:348.54px;top:507px;line-height:13px;color:#000;">1</span>
<span style="left:378.54px;top:507px;line-height:13px;color:#000;">0</span>
<span style="left:408.54px;top:507px;line-height:13px;color:#000;">0</span>
<span style="left:438.54px;top:507px;line-height:13px;color:#000;">1</span>
<span style="left:467.95px;top:507px;line-height:13px;color:#f00;transform:scaleX(0.8676);transform-origin:0 0;">H</span>
<span style="left:497.90px;top:507px;line-height:13px;color:#000;transform:scaleX(0.8175);transform-origin:0 0;">G</span>
<span style="left:527.95px;top:507px;line-height:13px;color:#f00;transform:scaleX(0.8676);transform-origin:0 0;">H</span>
<span style="left:558.54px;top:507px;line-height:13px;color:#000;">1</span>
<span style="left:588.54px;top:507px;line-height:13px;color:#000;">1</span>
<span style="left:618.54px;top:507px;line-height:13px;color:#000;">0</span>
<span style="left:648.54px;top:507px;line-height:13px;color:#000;">0</span>
<span style="left:678.54px;top:507px;line-height:13px;color:#000;">1</span>
<span style="left:708.10px;top:507px;line-height:13px;color:#000;transform:scaleX(0.8987);transform-origin:0 0;">V</span>
<span style="left:20.00px;top:521px;line-height:13px;color:#f00;letter-spacing:-0.050px;">Test Failed</span>
<span style="left:274.75px;top:521px;line-height:13px;color:#000;letter-spacing:-0.328px;">0013</span>
<span style="left:318.54px;top:521px;line-height:13px;color:#000;">0</span>
<span style="left:348.54px;top:521px;line-height:13px;color:#000;">0</span>
<span style="left:378.54px;top:521px;line-height:13px;color:#000;">0</span>
<span style="left:408.54px;top:521px;line-height:13px;color:#000;">1</span>
<span style="left:438.54px;top:521px;line-height:13px;color:#000;">1</span>
<span style="left:467.95px;top:521px;line-height:13px;color:#f00;transform:scaleX(0.8676);transform-origin:0 0;">H</span>
<span style="left:497.90px;top:521px;line-height:13px;color:#000;transform:scaleX(0.8175);transform-origin:0 0;">G</span>
<span style="left:527.95px;top:521px;line-height:13px;color:#f00;transform:scaleX(0.8676);transform-origin:0 0;">H</span>
<span style="left:558.54px;top:521px;line-height:13px;color:#000;">0</span>
<span style="left:588.54px;top:521px;line-height:13px;color:#000;">0</span>
<span style="left:618.54px;top:521px;line-height:13px;color:#000;">0</span>
<span style="left:648.54px;top:521px;line-height:13px;color:#000;">1</span>
<span style="left:678.54px;top:521px;line-height:13px;color:#000;">1</span>
<span style="left:708.10px;top:521px;line-height:13px;color:#000;transform:scaleX(0.8987);transform-origin:0 0;">V</span>
<span style="left:20.00px;top:535px;line-height:13px;color:#f00;letter-spacing:-0.050px;">Test Failed</span>
<span style="left:274.75px;top:535px;line-height:13px;color:#000;letter-spacing:-0.328px;">0014</span>
<span style="left:318.54px;top:535px;line-height:13px;color:#000;">1</span>
<span style="left:348.54px;top:535px;line-height:13px;color:#000;">0</span>
<span style="left:378.54px;top:535px;line-height:13px;color:#000;">0</span>
<span style="left:408.54px;top:535px;line-height:13px;color:#000;">1</span>
<span style="left:438.54px;top:535px;line-height:13px;color:#000;">1</span>
<span style="left:467.95px;top:535px;line-height:13px;color:#f00;transform:scaleX(0.8676);transform-origin:0 0;">H</span>
<span style="left:497.90px;top:535px;line-height:13px;color:#000;transform:scaleX(0.8175);transform-origin:0 0;">G</span>
<span style="left:527.95px;top:535px;line-height:13px;color:#f00;transform:scaleX(0.8676);transform-origin:0 0;">H</span>
<span style="left:558.54px;top:535px;line-height:13px;color:#000;">1</span>
<span style="left:588.54px;top:535px;line-height:13px;color:#000;">0</span>
<span style="left:618.54px;top:535px;line-height:13px;color:#000;">0</span>
<span style="left:648.54px;top:535px;line-height:13px;color:#000;">1</span>
<span style="left:678.54px;top:535px;line-height:13px;color:#000;">1</span>
<span style="left:708.10px;top:535px;line-height:13px;color:#000;transform:scaleX(0.8987);transform-origin:0 0;">V</span>
<span style="left:20.00px;top:549px;line-height:13px;color:#f00;letter-spacing:-0.050px;">Test Failed</span>
<span style="left:274.75px;top:549px;line-height:13px;color:#000;letter-spacing:-0.328px;">0015</span>
<span style="left:318.54px;top:549px;line-height:13px;color:#000;">0</span>
<span style="left:348.54px;top:549px;line-height:13px;color:#000;">1</span>
<span style="left:378.54px;top:549px;line-height:13px;color:#000;">0</span>
<span style="left:408.54px;top:549px;line-height:13px;color:#000;">1</span>
<span style="left:438.54px;top:549px;line-height:13px;color:#000;">1</span>
<span style="left:467.95px;top:549px;line-height:13px;color:#f00;transform:scaleX(0.8676);transform-origin:0 0;">H</span>
<span style="left:497.90px;top:549px;line-height:13px;color:#000;transform:scaleX(0.8175);transform-origin:0 0;">G</span>
<span style="left:527.95px;top:549px;line-height:13px;color:#f00;transform:scaleX(0.8676);transform-origin:0 0;">H</span>
<span style="left:558.54px;top:549px;line-height:13px;color:#000;">0</span>
<span style="left:588.54px;top:549px;line-height:13px;color:#000;">1</span>
<span style="left:618.54px;top:549px;line-height:13px;color:#000;">0</span>
<span style="left:648.54px;top:549px;line-height:13px;color:#000;">1</span>
<span style="left:678.54px;top:549px;line-height:13px;color:#000;">1</span>
<span style="left:708.10px;top:549px;line-height:13px;color:#000;transform:scaleX(0.8987);transform-origin:0 0;">V</span>
<span style="left:19.90px;top:563px;line-height:13px;color:#000;transform:scaleX(0.9618);transform-origin:0 0;">Normal</span>
<span style="left:274.75px;top:563px;line-height:13px;color:#000;letter-spacing:-0.328px;">0016</span>
<span style="left:318.54px;top:563px;line-height:13px;color:#000;">1</span>
<span style="left:348.54px;top:563px;line-height:13px;color:#000;">1</span>
<span style="left:378.54px;top:563px;line-height:13px;color:#000;">0</span>
<span style="left:408.54px;top:563px;line-height:13px;color:#000;">1</span>
<span style="left:438.54px;top:563px;line-height:13px;color:#000;">1</span>
<span style="left:468.70px;top:563px;line-height:13px;color:#000;transform:scaleX(0.8816);transform-origin:0 0;">L</span>
<span style="left:497.90px;top:563px;line-height:13px;color:#000;transform:scaleX(0.8175);transform-origin:0 0;">G</span>
<span style="left:528.70px;top:563px;line-height:13px;color:#000;transform:scaleX(0.8816);transform-origin:0 0;">L</span>
<span style="left:558.54px;top:563px;line-height:13px;color:#000;">1</span>
<span style="left:588.54px;top:563px;line-height:13px;color:#000;">1</span>
<span style="left:618.54px;top:563px;line-height:13px;color:#000;">0</span>
<span style="left:648.54px;top:563px;line-height:13px;color:#000;">1</span>
<span style="left:678.54px;top:563px;line-height:13px;color:#000;">1</span>
<span style="left:708.10px;top:563px;line-height:13px;color:#000;transform:scaleX(0.8987);transform-origin:0 0;">V</span>
<span style="left:20.40px;top:577px;line-height:13px;color:#f00;letter-spacing:-0.096px;">Vector Testing Failed</span>
<span style="left:24.00px;top:612px;line-height:13px;color:#000;letter-spacing:-0.038px;">Vector Table and Test Result</span>
<span style="left:253.50px;top:618px;line-height:13px;color:#000;transform:scaleX(0.8533);transform-origin:0 0;">TEST</span>
<span style="left:335.75px;top:618px;line-height:13px;color:#000;letter-spacing:-0.199px;">Auto Find</span>
<span style="left:438.50px;top:618px;line-height:13px;color:#000;transform:scaleX(0.8676);transform-origin:0 0;">BACK</span>
</div></body></html>
